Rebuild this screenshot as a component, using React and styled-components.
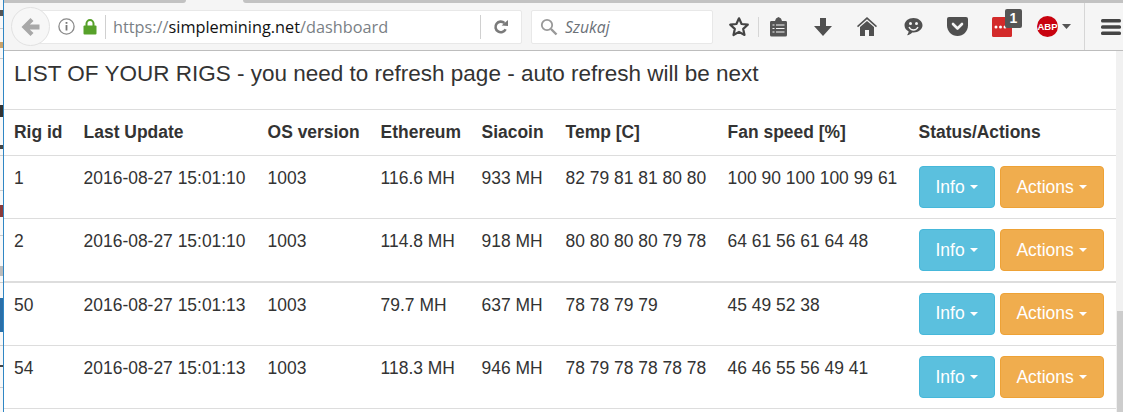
import React from 'react';
import styled, { createGlobalStyle } from 'styled-components';

const Global = createGlobalStyle`
  html, body { margin: 0; padding: 0; background: #fff; overflow: hidden; }
  * { box-sizing: border-box; }
`;

const Window = styled.div`
  width: 1123px;
  height: 412px;
  display: flex;
  overflow: hidden;
  font-family: "Liberation Sans", Arial, sans-serif;
  color: #333;
`;

// sliver of the window behind the browser
const LeftEdge = styled.div`
  width: 4px;
  flex: none;
  border-right: 1px solid #2f86c4;
  background:
    linear-gradient(#555, #555) 0 10px / 3px 6px no-repeat,
    linear-gradient(#ccc, #ccc) 0 28px / 3px 1px no-repeat,
    linear-gradient(#c9a26a, #c9a26a) 0 42px / 3px 6px no-repeat,
    linear-gradient(#ccc, #ccc) 0 58px / 3px 1px no-repeat,
    linear-gradient(#333, #333) 0 105px / 3px 12px no-repeat,
    linear-gradient(#444, #444) 0 145px / 3px 4px no-repeat,
    linear-gradient(#ccc, #ccc) 0 155px / 3px 1px no-repeat,
    linear-gradient(#ccc, #ccc) 0 190px / 3px 1px no-repeat,
    linear-gradient(#8a3a3a, #8a3a3a) 0 205px / 3px 12px no-repeat,
    linear-gradient(#ccc, #ccc) 0 235px / 3px 1px no-repeat,
    linear-gradient(#bbb, #bbb) 0 266px / 3px 10px no-repeat,
    linear-gradient(#ccc, #ccc) 0 282px / 3px 1px no-repeat,
    linear-gradient(#2a6fa8, #2a6fa8) 0 298px / 3px 34px no-repeat,
    linear-gradient(#ccc, #ccc) 0 345px / 3px 1px no-repeat,
    linear-gradient(#444, #444) 0 365px / 3px 2px no-repeat,
    linear-gradient(#ccc, #ccc) 0 387px / 3px 1px no-repeat,
    #f8f8f8;
`;

const Main = styled.div`
  flex: 1;
  min-width: 0;
  display: flex;
  flex-direction: column;
`;

const TabStrip = styled.div`
  height: 3px;
  flex: none;
  display: flex;
  justify-content: space-between;
  background: #f5f5f5;
`;

const TabEdge = styled.div`
  background: #c2c2c2;
  width: ${p => p.$w}px;
  border-radius: ${p => (p.$right ? '0 0 0 5px' : '0 0 5px 0')};
`;

const Toolbar = styled.div`
  height: 48px;
  flex: none;
  display: flex;
  align-items: center;
  background: #f5f5f5;
  border-bottom: 1px solid #bdbdbd;
  padding-left: 7px;
`;

const BackButton = styled.div`
  width: 39px;
  height: 39px;
  flex: none;
  border-radius: 50%;
  background: #f7f7f7;
  border: 1px solid #e2e2e2;
  display: flex;
  align-items: center;
  justify-content: center;
  margin-right: -14px;
  position: relative;
`;

const UrlBar = styled.div`
  width: 486px;
  height: 34px;
  flex: none;
  background: #fff;
  border: 1px solid #e8e8e8;
  border-radius: 2px;
  display: flex;
  align-items: center;
  padding-left: 21px;
`;

const IdentityBox = styled.div`
  display: flex;
  align-items: center;
  gap: 8px;
  width: 48px;
  flex: none;
  height: 24px;
  border-right: 1px solid #d0d0d0;
`;

const Url = styled.div`
  font-family: "Open Sans", sans-serif;
  font-size: 16.3px;
  color: #7a7f85;
  margin-left: 7px;
  flex: 1;
  white-space: nowrap;
  b { font-weight: 400; color: #111; }
`;

const Reload = styled.div`
  width: 41px;
  height: 24px;
  flex: none;
  border-left: 1px solid #d0d0d0;
  display: flex;
  align-items: center;
  justify-content: center;
`;

const SearchBar = styled.div`
  width: 182px;
  height: 34px;
  flex: none;
  margin-left: 9px;
  background: #fff;
  border: 1px solid #e8e8e8;
  border-radius: 2px;
  display: flex;
  align-items: center;
  gap: 7px;
  padding-left: 8px;
  font-family: "Open Sans", sans-serif;
  font-style: italic;
  font-size: 15.8px;
  color: #6b7178;
`;

const Tools = styled.div`
  display: flex;
  align-items: center;
  flex: 1;
  height: 100%;
`;

const Tool = styled.div`
  flex: none;
  display: flex;
  align-items: center;
  position: relative;
  margin-left: ${p => p.$ml}px;
`;

const ToolSep = styled.div`
  width: 1px;
  flex: none;
  height: ${p => p.$h}px;
  margin-left: ${p => p.$ml}px;
  background: #d6d6d6;
`;

const Badge = styled.span`
  position: absolute;
  left: 13px;
  top: -8px;
  width: 17px;
  height: 19px;
  border-radius: 2px;
  background: #555;
  color: #fff;
  font-size: 14px;
  font-weight: 700;
  line-height: 19px;
  text-align: center;
`;

const Body = styled.div`
  flex: 1;
  display: flex;
  min-height: 0;
`;

const Page = styled.div`
  flex: 1;
  min-width: 0;
  background: #fff;
`;

const Heading = styled.div`
  height: 58px;
  padding: 8px 0 0 10px;
  font-size: 22.5px;
  line-height: 30px;
  color: #333;
  white-space: nowrap;
`;

const Table = styled.table`
  width: 100%;
  border-collapse: collapse;
  table-layout: fixed;
  font-size: 17.45px;
  line-height: 25px;
`;

const Th = styled.th`
  text-align: left;
  font-weight: 700;
  height: 46px;
  padding: 0 0 0 10px;
  border-top: 1px solid #ddd;
  border-bottom: 1px solid #ddd;
  vertical-align: middle;
  white-space: nowrap;
`;

const Td = styled.td`
  height: ${p => p.$h}px;
  padding: 10px 0 0 10px;
  vertical-align: top;
  border-bottom: ${p => (p.$thick ? '2px' : '1px')} solid #ddd;
  white-space: nowrap;
`;

const Buttons = styled.div`
  display: flex;
  gap: 5px;
`;

const Btn = styled.div`
  height: 42px;
  width: ${p => p.$w}px;
  display: flex;
  align-items: center;
  justify-content: center;
  gap: 5px;
  color: #fff;
  font-size: 17.5px;
  border-radius: 4px;
  background: ${p => (p.$kind === 'info' ? '#5bc0de' : '#f0ad4e')};
  border: 1px solid ${p => (p.$kind === 'info' ? '#46b8da' : '#eea236')};
`;

const Caret = styled.span`
  width: 0;
  height: 0;
  border-top: 4.4px solid #fff;
  border-left: 4.4px solid transparent;
  border-right: 4.4px solid transparent;
`;

const ScrollTrack = styled.div`
  width: 7px;
  flex: none;
  background: #f1f1f1;
  display: flex;
  flex-direction: column;
`;

const ScrollThumb = styled.div`
  margin-top: 260px;
  margin-left: 1px;
  flex: 1;
  background: #cdcdcd;
`;

const rigs = [
  { id: '1', at: '2016-08-27 15:01:10', os: '1003', eth: '116.6 MH', sia: '933 MH', temp: '82 79 81 81 80 80', fan: '100 90 100 100 99 61', h: 63 },
  { id: '2', at: '2016-08-27 15:01:10', os: '1003', eth: '114.8 MH', sia: '918 MH', temp: '80 80 80 80 79 78', fan: '64 61 56 61 64 48', h: 63, thick: true },
  { id: '50', at: '2016-08-27 15:01:13', os: '1003', eth: '79.7 MH', sia: '637 MH', temp: '78 78 79 79', fan: '45 49 52 38', h: 64 },
  { id: '54', at: '2016-08-27 15:01:13', os: '1003', eth: '118.3 MH', sia: '946 MH', temp: '78 79 78 78 78 78', fan: '46 46 55 56 49 41', h: 63 },
];

const columns = [
  ['Rig id', 69.6],
  ['Last Update', 184],
  ['OS version', 113],
  ['Ethereum', 101],
  ['Siacoin', 84],
  ['Temp [C]', 162],
  ['Fan speed [%]', 191],
  ['Status/Actions', 207.4],
];

const BackArrow = () => (
  <svg width="19" height="18" viewBox="0 0 19 18"><path d="M9.500 0 .5 9l9 9 3-3-3.700-3.500H18.500v-5H8.800L12.500 3z" fill="#a8a8a8" /></svg>
);

const InfoIcon = () => (
  <svg width="17" height="17" viewBox="0 0 17 17"><circle cx="8.500" cy="8.500" r="7.600" fill="none" stroke="#8a8a8a" strokeWidth="1.300" /><rect x="7.600" y="7" width="1.800" height="5.500" fill="#777" /><rect x="7.600" y="4" width="1.800" height="1.800" fill="#777" /></svg>
);

const LockIcon = () => (
  <svg width="14" height="16" viewBox="0 0 14 16"><path d="M3.500 7V4.600a3.500 3.500 0 0 1 7 0V7" fill="none" stroke="#57a12a" strokeWidth="2" /><rect x="0.500" y="6.500" width="13" height="9" rx="1" fill="#57a12a" /></svg>
);

const ReloadIcon = () => (
  <svg width="16" height="16" viewBox="0 0 16 16"><path d="M12.600 10.200A5.300 5.300 0 1 1 11.400 4" fill="none" stroke="#7a7a7a" strokeWidth="2.600" /><path d="M8.600 6.600 15 1v6z" fill="#7a7a7a" /></svg>
);

const SearchIcon = () => (
  <svg width="18" height="18" viewBox="0 0 18 18"><circle cx="7" cy="7" r="5.200" fill="none" stroke="#999" strokeWidth="1.800" /><path d="m11 11 5.500 5.500" stroke="#999" strokeWidth="2.400" /></svg>
);

const StarIcon = () => (
  <svg width="22" height="21" viewBox="0 0 22 21"><path d="M11 2.300 13.600 8l6.200.7-4.600 4.200 1.300 6.100L11 15.900 5.500 19l1.300-6.100L2.200 8.700 8.400 8z" fill="none" stroke="#444" strokeWidth="2.200" strokeLinejoin="round" /></svg>
);

const ClipboardIcon = () => (
  <svg width="19" height="20" viewBox="0 0 19 20"><path d="M2 4h4l1-2.500L9.500 0 12 1.500 13 4h4a1.500 1.500 0 0 1 1 1.500V18a1.500 1.500 0 0 1-1.500 1.500h-14A1.500 1.500 0 0 1 1 18V5.500A1.500 1.500 0 0 1 2 4z" fill="#555" /><path d="M3.500 8h2M7 8h8.500M3.500 11.500h2M7 11.500h8.500M3.500 15h2M7 15h8.500" stroke="#f5f5f5" strokeWidth="1.200" /></svg>
);

const DownloadIcon = () => (
  <svg width="18" height="18" viewBox="0 0 18 18"><path d="M6 0h6v8h6l-9 10L0 8h6z" fill="#505050" /></svg>
);

const HomeIcon = () => (
  <svg width="20" height="19" viewBox="0 0 20 19"><path d="M10 0 0 9l1 1.200 9-7.900 9 7.900L20 9z" fill="#505050" /><path d="M10 4 3 10v9h5v-6h4v6h5v-9z" fill="#505050" /></svg>
);

const SmileIcon = () => (
  <svg width="19" height="18" viewBox="0 0 19 18"><path d="M9.500 0C4.500 0 .5 3.200.5 7.300c0 2.700 1.700 5 4.200 6.200-.2 1.500-1 2.800-1.700 3.800 2.200-.3 4-1.500 5.200-2.800h1.300c5 0 9-3.200 9-7.200S14.500 0 9.500 0z" fill="#505050" /><circle cx="6.500" cy="5.500" r="1.500" fill="#f5f5f5" /><circle cx="12.500" cy="5.500" r="1.500" fill="#f5f5f5" /><path d="M5 9c1 2 2.700 3 4.500 3S13 11 14 9" fill="none" stroke="#f5f5f5" strokeWidth="1.300" /></svg>
);

const PocketIcon = () => (
  <svg width="21" height="19" viewBox="0 0 21 19"><path d="M2 0h17a2 2 0 0 1 2 2v6.500C21 14.300 16.300 19 10.500 19S0 14.300 0 8.500V2a2 2 0 0 1 2-2z" fill="#505050" /><path d="m6 7 4.500 4.500L15 7" fill="none" stroke="#f5f5f5" strokeWidth="2.600" strokeLinecap="round" strokeLinejoin="round" /></svg>
);

const LastPassIcon = () => (
  <svg width="20" height="20" viewBox="0 0 20 20"><rect width="20" height="20" rx="1.500" fill="#d32a2a" /><circle cx="4" cy="10" r="1.500" fill="#fff" /><circle cx="8.500" cy="10" r="1.500" fill="#fff" /><circle cx="13" cy="10" r="1.500" fill="#fff" /></svg>
);

const AbpIcon = () => (
  <svg width="21" height="21" viewBox="0 0 21 21"><circle cx="10.500" cy="10.500" r="10.500" fill="#c8030f" /><text x="10.500" y="14" textAnchor="middle" fontFamily="Liberation Sans" fontWeight="700" fontSize="9.500" fill="#fff">ABP</text></svg>
);

const SmallCaret = () => (
  <svg width="9" height="5" viewBox="0 0 9 5"><path d="M0 0h9L4.500 5z" fill="#555" /></svg>
);

const MenuIcon = () => (
  <svg width="20" height="16" viewBox="0 0 20 16"><rect y="0" width="20" height="3.600" rx="1.500" fill="#444" /><rect y="6.200" width="20" height="3.600" rx="1.500" fill="#444" /><rect y="12.400" width="20" height="3.600" rx="1.500" fill="#444" /></svg>
);

const App = () => (
  <Window>
    <Global />
    <LeftEdge />
    <Main>
      <TabStrip><TabEdge $w={182} /><TabEdge $w={880} $right /></TabStrip>
      <Toolbar>
        <BackButton><BackArrow /></BackButton>
        <UrlBar>
          <IdentityBox><InfoIcon /><LockIcon /></IdentityBox>
          <Url>https://<b>simplemining.net</b>/dashboard</Url>
          <Reload><ReloadIcon /></Reload>
        </UrlBar>
        <SearchBar><SearchIcon />Szukaj</SearchBar>
        <Tools>
          <Tool $ml={15}><StarIcon /></Tool>
          <ToolSep $ml={8} $h={20} />
          <Tool $ml={10}><ClipboardIcon /></Tool>
          <Tool $ml={26}><DownloadIcon /></Tool>
          <Tool $ml={25}><HomeIcon /></Tool>
          <Tool $ml={27}><SmileIcon /></Tool>
          <Tool $ml={24}><PocketIcon /></Tool>
          <Tool $ml={24}><LastPassIcon /><Badge>1</Badge></Tool>
          <Tool $ml={25}><AbpIcon /></Tool>
          <Tool $ml={4}><SmallCaret /></Tool>
          <ToolSep $ml={13} $h={47} />
          <Tool $ml={16}><MenuIcon /></Tool>
        </Tools>
      </Toolbar>
      <Body>
        <Page>
          <Heading>LIST OF YOUR RIGS - you need to refresh page - auto refresh will be next</Heading>
          <Table>
            <colgroup>
              {columns.map(([name, w]) => <col key={name} style={{ width: w }} />)}
            </colgroup>
            <thead>
              <tr>{columns.map(([name]) => <Th key={name}>{name}</Th>)}</tr>
            </thead>
            <tbody>
              {rigs.map(r => (
                <tr key={r.id}>
                  {[r.id, r.at, r.os, r.eth, r.sia, r.temp, r.fan].map((v, i) => (
                    <Td key={i} $h={r.h} $thick={r.thick}>{v}</Td>
                  ))}
                  <Td $h={r.h} $thick={r.thick}>
                    <Buttons>
                      <Btn $kind="info" $w={76}>Info <Caret /></Btn>
                      <Btn $kind="warning" $w={104}>Actions <Caret /></Btn>
                    </Buttons>
                  </Td>
                </tr>
              ))}
            </tbody>
          </Table>
        </Page>
        <ScrollTrack><ScrollThumb /></ScrollTrack>
      </Body>
    </Main>
  </Window>
);

export default App;
